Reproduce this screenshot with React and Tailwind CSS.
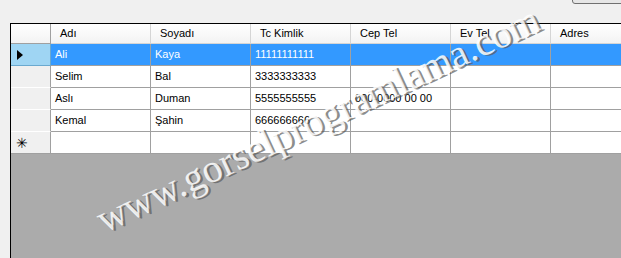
import React from "react";

const cols = ["Adı", "Soyadı", "Tc Kimlik", "Cep Tel", "Ev Tel", "Adres"];
const rows = [
  ["Ali", "Kaya", "11111111111", "", "", ""],
  ["Selim", "Bal", "3333333333", "", "", ""],
  ["Aslı", "Duman", "5555555555", "000-0000 00 00", "", ""],
  ["Kemal", "Şahin", "666666666", "", "", ""],
];

export default function App() {
  return (
    <div
      className="relative w-[621px] h-[258px] overflow-hidden bg-[#f0f0f0]"
      style={{ fontFamily: "'Liberation Sans', Arial, sans-serif" }}
    >
      <div className="absolute left-[572px] top-[-10px] w-[80px] h-[14px] border border-[#707070] rounded-[3px] bg-[#e6e6e6]" />
      <div className="absolute left-[10px] top-[23px] w-[640px] h-[260px] border-t border-l border-black bg-[#ababab]">
        <div className="grid grid-cols-[40px_repeat(5,100px)_1fr] text-[11px] text-black">
          <div className="h-[20px] bg-gradient-to-b from-white to-[#f3f3f3] border-r border-b border-[#a0a0a0]" />
          {cols.map((c) => (
            <div
              key={c}
              className="h-[20px] pl-[9px] flex items-center bg-gradient-to-b from-white to-[#f3f3f3] border-r border-b border-[#d5d5d5]"
            >
              {c}
            </div>
          ))}
          {rows.map((r, i) => (
            <React.Fragment key={i}>
              <div
                className={
                  "h-[22px] flex items-center pl-[6px] border-r border-b " +
                  (i === 0
                    ? "bg-[#9fd5f3] border-[#6aa9cf]"
                    : "bg-[#f0f0f0] border-r-[#a0a0a0] border-b-white")
                }
              >
                {i === 0 && (
                  <svg width="6" height="10" viewBox="0 0 6 10">
                    <path d="M0 0 L6 5 L0 10 Z" fill="#000" />
                  </svg>
                )}
              </div>
              {r.map((v, j) => (
                <div
                  key={j}
                  className={
                    "h-[22px] pl-[4px] flex items-center border-r border-b border-[#a0a0a0] whitespace-nowrap overflow-hidden " +
                    (i === 0 ? "bg-[#3399ff] text-white" : "bg-white")
                  }
                >
                  {v}
                </div>
              ))}
            </React.Fragment>
          ))}
          <div className="h-[22px] flex items-center pl-[5px] bg-[#f0f0f0] border-r border-b border-[#a0a0a0] text-[14px] leading-none">
            ✳
          </div>
          {cols.map((c) => (
            <div key={c} className="h-[22px] bg-white border-r border-b border-[#a0a0a0]" />
          ))}
        </div>
      </div>
      <div
        className="absolute left-[100px] top-[202px] origin-left -rotate-[25deg] text-[40px] leading-none whitespace-nowrap"
        style={{
          fontFamily: "'Liberation Serif', serif",
          textShadow: "-1px -1px 0 rgba(255,255,255,0.85), 1px 1px 0 rgba(90,90,90,0.7)",
          color: "transparent",
        }}
      >
        www.gorselprogramlama.com
      </div>
    </div>
  );
}
